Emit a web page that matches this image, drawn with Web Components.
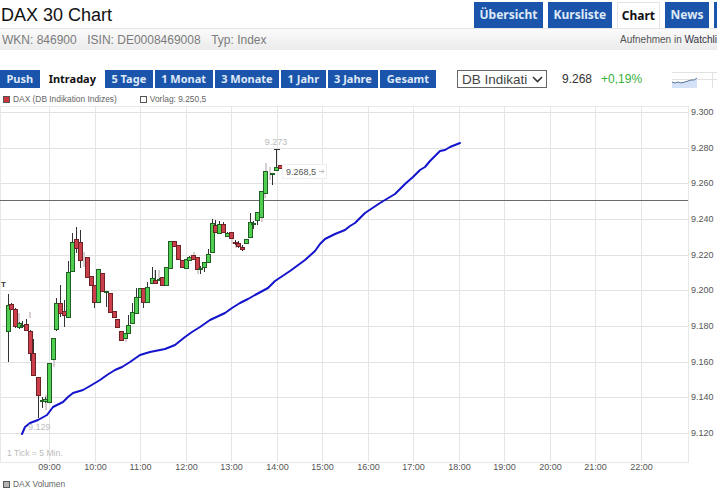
<!DOCTYPE html>
<html lang="de">
<head>
<meta charset="utf-8">
<title>DAX 30 Chart</title>
<style>
  html, body { margin: 0; height: 491px; overflow: hidden; background: #fff; }
  body { width: 717px; font-family: "Liberation Sans", Arial, sans-serif; }
</style>
</head>
<body>
<site-header heading="DAX 30 Chart">
  <nav-tab>Übersicht</nav-tab>
  <nav-tab>Kursliste</nav-tab>
  <nav-tab active>Chart</nav-tab>
  <nav-tab>News</nav-tab>
  <nav-tab></nav-tab>
</site-header>
<info-bar>
  <span>WKN: 846900</span>
  <span>ISIN: DE0008469008</span>
  <span>Typ: Index</span>
  <span slot="right">Aufnehmen in <span style="color:#334">Watchliste</span></span>
</info-bar>
<chart-toolbar>
  <range-tab>Push</range-tab>
  <range-tab active>Intraday</range-tab>
  <range-tab>5 Tage</range-tab>
  <range-tab>1 Monat</range-tab>
  <range-tab>3 Monate</range-tab>
  <range-tab>1 Jahr</range-tab>
  <range-tab>3 Jahre</range-tab>
  <range-tab>Gesamt</range-tab>
  <quote-box slot="quote" source="DB Indikati" price="9.268" change="+0,19%"></quote-box>
</chart-toolbar>
<chart-legend>
  <legend-item color="#d0343c">DAX (DB Indikation Indizes)</legend-item>
  <legend-item color="#fff" style="margin-left:23px">Vorlag: 9.250,5</legend-item>
</chart-legend>
<candle-chart></candle-chart>
<chart-legend style="padding-top:3px">
  <legend-item color="#b4b4b4">DAX Volumen</legend-item>
</chart-legend>

<script>
class SiteHeader extends HTMLElement {
  connectedCallback() {
    if (this.shadowRoot) return;
    this.attachShadow({ mode: "open" });
    this.shadowRoot.innerHTML = `
    <style>
      :host { display: flex; height: 28px; overflow: hidden; }
      h1 { flex: 0 0 474px; margin: 0; padding: 2px 0 0 1px; box-sizing: border-box;
        font: 400 18px/26px "Liberation Sans", Arial, sans-serif; color: #111; }
      nav { display: flex; gap: 5px; padding-top: 2px; }
    </style>
    <h1>${this.getAttribute("heading") || ""}</h1>
    <nav><slot></slot></nav>`;
  }
}

class NavTab extends HTMLElement {
  constructor() {
    super();
    this.attachShadow({ mode: "open" });
    this.shadowRoot.innerHTML = `
    <style>
      :host { display: block; flex: none; box-sizing: border-box; height: 26px; min-width: 24px; padding: 0 5.5px;
        background: #1b55ab; color: #dfe9f7;
        font: 700 12px/25px "Noto Sans", Verdana, sans-serif; }
      :host([active]) { background: #fff; color: #111; padding: 0 4px; border: 1px solid #e4e4e4; border-bottom: 0; }
    </style>
    <slot></slot>`;
  }
}

class InfoBar extends HTMLElement {
  constructor() {
    super();
    this.attachShadow({ mode: "open" });
    this.shadowRoot.innerHTML = `
    <style>
      :host { display: flex; justify-content: space-between; align-items: center; box-sizing: border-box;
        height: 22px; border-top: 1px solid #e4e4e4; padding-left: 2px; overflow: hidden;
        background: linear-gradient(#fbfbfb, #ebebeb);
        color: #7b7b7b; font: 12px "Liberation Sans", Arial, sans-serif; white-space: nowrap; }
      .left { display: flex; gap: 10.500px; }
      .right { flex: none; width: 97px; overflow: hidden; font-size: 10px; color: #555; }
    </style>
    <div class="left"><slot></slot></div>
    <div class="right"><slot name="right"></slot></div>`;
  }
}

class RangeTab extends HTMLElement {
  constructor() {
    super();
    this.attachShadow({ mode: "open" });
    this.shadowRoot.innerHTML = `
    <style>
      :host { display: block; flex: none; height: 18px; padding: 0 6.5px; box-sizing: border-box;
        background: #1b55ab; color: #dfe9f7; white-space: nowrap;
        font: 700 11px/17px "Noto Sans", Verdana, sans-serif; }
      :host([active]) { background: #fff; color: #111; padding: 0 7px; }
    </style>
    <slot></slot>`;
  }
}

class ChartToolbar extends HTMLElement {
  constructor() {
    super();
    this.attachShadow({ mode: "open" });
    this.shadowRoot.innerHTML = `
    <style>
      :host { display: flex; align-items: flex-start; height: 18px; margin-top: 20px; overflow: hidden; }
      .tabs { flex: 0 0 457px; min-width: 0; display: flex; gap: 2px; }
    </style>
    <div class="tabs"><slot></slot></div>
    <slot name="quote"></slot>`;
  }
}

class QuoteBox extends HTMLElement {
  connectedCallback() {
    if (this.shadowRoot) return;
    this.attachShadow({ mode: "open" });
    const attr = (n) => this.getAttribute(n) || "";
    this.shadowRoot.innerHTML = `
    <style>
      :host { display: flex; align-items: center; height: 18px; font: 12px "Liberation Sans", Arial, sans-serif; }
      .select { display: flex; align-items: center; justify-content: space-between; box-sizing: border-box;
        width: 90px; height: 18px; padding: 0 3px 0 4px; border: 1px solid #666; color: #444; font-size: 13.5px; }
      .price { margin-left: 15px; color: #333; }
      .change { margin-left: 9px; color: #38b03c; }
      svg.thumb { margin-left: 30px; flex: none; align-self: flex-start; margin-top: 2px; }
    </style>
    <div class="select">${attr("source")}
      <svg width="11" height="7" viewBox="0 0 11 7"><path d="M1 1l4.500 4.500L10 1" fill="none" stroke="#333" stroke-width="1.600"/></svg>
    </div>
    <span class="price">${attr("price")}</span>
    <span class="change">${attr("change")}</span>
    <svg class="thumb" width="47" height="16" viewBox="0 0 47 16">
      <path d="M0 .5h47M0 7.500h47M40.500 0v16" stroke="#e2e2e2" fill="none"/>
      <path d="M0 16V10l3 1 3-1 3 1 4-1 3-1 3-1 3 0 3-2V16z" fill="#d3e2f6"/>
      <path d="M0 10l3 1 3-1 3 1 4-1 3-1 3-1 3 0 3-2" stroke="#5a7596" fill="none"/>
    </svg>`;
  }
}

class ChartLegend extends HTMLElement {
  constructor() {
    super();
    this.attachShadow({ mode: "open" });
    this.shadowRoot.innerHTML = `
    <style>
      :host { display: flex; align-items: center; height: 14px; padding: 4px 0 0 3px; }
    </style>
    <slot></slot>`;
  }
}

class LegendItem extends HTMLElement {
  connectedCallback() {
    if (this.shadowRoot) return;
    this.attachShadow({ mode: "open" });
    this.shadowRoot.innerHTML = `
    <style>
      :host { display: flex; align-items: center; gap: 3px; color: #666; font: 8.4px "Liberation Sans", Arial, sans-serif; }
      i { width: 5px; height: 5px; border: 1px solid #555; background: ${this.getAttribute("color")}; }
    </style>
    <i></i><slot></slot>`;
  }
}

// pixel coordinates read off the reference: x, high, bodyTop, bodyBottom, low, colour
const CANDLES = [
  [8,294,305,331,362,"g"],[11,303,304,309,310,"r"],[15,308,309,326,328,"r"],[19,322,323,327,329,"g"],
  [22,321,325,326,328,"g"],[26,319,324,330,331,"r"],[30,330,331,353,361,"r"],[33,339,353,375,376,"r"],
  [38,377,377,395,418,"r"],[42,397,400,401,408,"g"],[45,397,399,401,403,"g"],[49,363,363,402,403,"g"],
  [53,338,338,359,360,"g"],[56,298,303,329,331,"g"],[60,285,303,313,317,"r"],[64,300,311,315,327,"r"],
  [68,261,272,317,318,"g"],[72,233,242,271,272,"g"],[76,227,239,248,253,"r"],[80,230,242,260,268,"r"],
  [87,257,257,277,278,"r"],[91,276,276,285,286,"r"],[94,285,285,302,308,"r"],[98,269,269,302,303,"g"],
  [102,273,273,291,292,"r"],[106,291,291,292,307,"g"],[110,293,293,312,313,"r"],[114,311,311,317,318,"r"],
  [117,319,319,327,328,"r"],[121,331,331,340,341,"r"],[125,333,333,338,339,"g"],[128,315,325,333,334,"g"],
  [132,303,312,323,324,"g"],[136,288,297,313,314,"g"],[140,288,288,297,298,"g"],[143,288,288,302,308,"r"],
  [147,282,287,302,303,"g"],[152,267,278,283,284,"g"],[155,270,280,283,284,"r"],[159,278,279,280,281,"g"],
  [162,277,277,285,286,"r"],[166,267,267,285,286,"g"],[170,241,241,268,269,"g"],[174,241,241,246,247,"r"],
  [178,245,245,259,260,"r"],[182,260,260,267,268,"r"],[186,259,259,268,269,"g"],[189,256,257,260,261,"g"],
  [193,255,255,259,260,"r"],[197,257,257,269,270,"r"],[200,266,268,269,274,"g"],[204,262,262,267,272,"g"],
  [208,249,254,262,263,"g"],[212,219,223,252,253,"g"],[215,220,225,232,233,"r"],[219,221,224,233,234,"g"],
  [223,222,224,232,233,"r"],[227,232,233,236,237,"g"],[231,232,232,238,239,"r"],[235,240,242,243,245,"r"],
  [238,241,243,246,248,"r"],[242,245,247,249,251,"r"],[246,239,239,243,244,"g"],[250,213,222,237,238,"g"],
  [253,221,223,224,229,"g"],[257,212,212,220,225,"g"],[261,191,191,217,218,"g"],[265,171,171,193,194,"g"],
  [272,173,173,174,185,"g"],[276,149,167,170,171,"g"],[280,165,165,168,169,"r"]
];
const GHOSTS = [
  [18,313,323],[83,252,267],[92,287,303],[53,360,367],[45,395,410],[154,270,280],[158,270,280],[193,252,255],
  [197,270,274],[231,238,244],[235,244,248],[240,246,250],[265,163,172],[269,167,180],[264,193,198],[261,218,222],
  [125,339,342],[78,250,258],[29,312,318]
];
const BLUE = "22,434 25,427 30,423 38,420 47,415 50,411 53,407 63,402 68,397 73,393 83,390 90,386 100,380 107,375 115,370 122,367 130,362 140,355 150,352 165,349 175,345 185,337 192,332 200,327 210,320 225,313 232,308 240,303 248,299 255,295 268,288 275,281 290,271 305,260 315,251 320,244 325,239 335,234 345,230 350,226 355,223 365,213 380,203 395,194 400,189 405,184 413,177 420,170 425,167 430,161 435,156 440,151 445,150 450,147 460,143";

class CandleChart extends HTMLElement {
  constructor() {
    super();
    this.attachShadow({ mode: "open" });
  }

  connectedCallback() {
    this.render();
  }

  render() {
    const top = 106; // the svg starts at this page y, so we shift everything by it
    const levels = ["9.300","9.280","9.260","9.240","9.220","9.200","9.180","9.160","9.140","9.120"];
    const hours = ["09:00","10:00","11:00","12:00","13:00","14:00","15:00","16:00","17:00","18:00","19:00","20:00","21:00","22:00"];

    const hLines = levels.map((t, i) => {
      const y = Math.round(112 + i * 35.67) + 0.5;
      return `<path d="M1 ${y}H688" stroke="#e2e2e2"/>
        <text x="691" y="${y + 2.5}" class="axis">${t}</text>`;
    }).join("");
    const vLines = hours.map((t, i) => {
      const x = Math.round(49 + i * 45.5) + 0.5;
      return `<path d="M${x} 106V462" stroke="#e6e6e6"/>
        <text x="${x}" y="470" class="axis" text-anchor="middle">${t}</text>`;
    }).join("");

    const ghosts = GHOSTS.map(([x, a, b]) =>
      `<rect x="${x}" y="${a}" width="2" height="${b - a}" fill="#d8d0d0"/>`).join("");
    const candles = CANDLES.map(([x, hi, a, b, lo, c]) => {
      const fill = c === "g" ? "#4fce50" : "#c9404a";
      const edge = c === "g" ? "#1f5f24" : "#6e2226";
      return `<path d="M${x + 0.5} ${hi}V${lo}" stroke="#333"/>
        <rect x="${x - 1.5}" y="${a + 0.5}" width="4" height="${Math.max(b - a, 1)}" fill="${fill}" stroke="${edge}"/>`;
    }).join("");

    this.shadowRoot.innerHTML = `
    <style>
      :host { display: block; height: 368px; }
      svg { display: block; font-family: "Liberation Sans", Arial, sans-serif; }
      .axis { font-size: 9px; fill: #555; }
      .note { font-size: 8.600px; fill: #bbb; }
    </style>
    <svg width="717" height="368" viewBox="0 ${top} 717 368">
      <rect x="0.5" y="106.500" width="688" height="356" fill="#fff" stroke="#e8e8e8"/>
      ${hLines}${vLines}
      <path d="M0 200.500H688" stroke="#6a6a6a"/>
      ${ghosts}${candles}
      <path d="M274 149.500H280" stroke="#333"/>
      <polyline points="${BLUE}" fill="none" stroke="#1414cc" stroke-width="2" stroke-linejoin="round" stroke-linecap="round"/>
      <text x="1" y="287" font-size="8" font-weight="700" fill="#333">T</text>
      <text x="276" y="145" class="note" text-anchor="middle" style="font-size:9px">9.273</text>
      <text x="28" y="430" class="note" style="font-size:9px">9.129</text>
      <text x="7" y="456" class="note">1 Tick = 5 Min.</text>
      <rect x="282.500" y="164.500" width="44" height="14" fill="#fff" stroke="#eee"/>
      <text x="286" y="174.500" class="axis">9.268,5</text>
      <path d="M319 171.500h5m-2-2l2 2-2 2" fill="none" stroke="#bbb"/>
    </svg>`;
  }
}

customElements.define("site-header", SiteHeader);
customElements.define("nav-tab", NavTab);
customElements.define("info-bar", InfoBar);
customElements.define("range-tab", RangeTab);
customElements.define("chart-toolbar", ChartToolbar);
customElements.define("quote-box", QuoteBox);
customElements.define("chart-legend", ChartLegend);
customElements.define("legend-item", LegendItem);
customElements.define("candle-chart", CandleChart);
</script>
</body>
</html>
